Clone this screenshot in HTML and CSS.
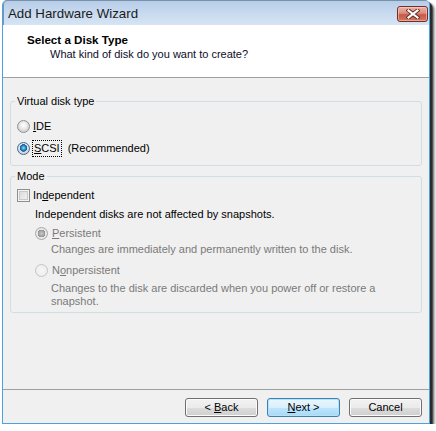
FILE: index.html
```html
<!DOCTYPE html>
<html>
<head>
<meta charset="utf-8">
<link rel="stylesheet" href="styles.css">
</head>
<body>
<div class="window">
  <div class="titlebar">
    <span class="title">Add Hardware Wizard</span>
    <div class="close">
      <svg width="14" height="10" viewBox="0 0 14 10">
        <path d="M2.5 1.5 L11.5 8.5 M11.5 1.5 L2.5 8.5" stroke="#5a2a26" stroke-width="4" stroke-linecap="square"/>
        <path d="M2.5 1.5 L11.5 8.5 M11.5 1.5 L2.5 8.5" stroke="#ffffff" stroke-width="2.2" stroke-linecap="square"/>
      </svg>
    </div>
  </div>
  <div class="header">
    <div class="h-title">Select a Disk Type</div>
    <div class="h-sub">What kind of disk do you want to create?</div>
  </div>
  <div class="content">
    <fieldset class="group g1">
      <legend>Virtual disk type</legend>
      <div class="row r22">
        <span class="radio"></span>
        <span class="lbl"><u>I</u>DE</span>
      </div>
      <div class="row r22">
        <span class="radio checked"></span>
        <span class="lbl focus"><u>S</u>CSI</span>
        <span class="rec">(Recommended)</span>
      </div>
    </fieldset>
    <fieldset class="group g2">
      <legend>Mode</legend>
      <div class="row r22">
        <span class="check"></span>
        <span class="lbl">In<u>d</u>ependent</span>
      </div>
      <div class="desc d1">Independent disks are not affected by snapshots.</div>
      <div class="row r20 sub1">
        <span class="radio disabled dchecked"></span>
        <span class="lbl dis"><u>P</u>ersistent</span>
      </div>
      <div class="desc dis d2">Changes are immediately and permanently written to the disk.</div>
      <div class="row r20 sub2">
        <span class="radio disabled"></span>
        <span class="lbl dis">N<u>o</u>npersistent</span>
      </div>
      <div class="desc dis d3">Changes to the disk are discarded when you power off or restore a<br>snapshot.</div>
    </fieldset>
  </div>
  <div class="footer">
    <div class="btn">&lt; <u>B</u>ack</div>
    <div class="btn default"><u>N</u>ext &gt;</div>
    <div class="btn">Cancel</div>
  </div>
</div>
</body>
</html>
```
FILE: styles.css
```css
html, body {
  margin: 0;
  padding: 0;
  background: #ffffff;
}
body {
  font-family: "Liberation Sans", Arial, sans-serif;
  font-size: 11px;
  line-height: 13px;
  color: #000;
}
.window {
  margin-left: 2px;
  width: 428px;
  height: 424px;
  box-sizing: border-box;
  border: 1px solid #4aa3e0;
  border-top-color: #7b8fa8;
  border-radius: 5px 5px 0 0;
  display: flex;
  flex-direction: column;
  background: #f0f0f0;
  box-shadow: 2px 2px 0 #2a2a2a, 3px 3px 2px rgba(0,0,0,0.75), 5px 5px 3px rgba(0,0,0,0.35);
}
.titlebar {
  height: 24px;
  flex: none;
  display: flex;
  align-items: center;
  justify-content: space-between;
  padding: 0 1px 0 5px;
  background: linear-gradient(#b6cde8, #c8daef 50%, #d6e4f4);
  border-radius: 4px 4px 0 0;
  box-shadow: inset 1px 0 0 #7f93ab;
}
.title {
  font-size: 13.3px;
  line-height: 24px;
  color: #1b1b1b;
  padding-top: 2px;
}
.close {
  width: 29px;
  height: 14px;
  margin-top: 2px;
  border: 1px solid #7a2c22;
  border-radius: 3px;
  background: linear-gradient(#eab3a7, #dc8a7b 45%, #c75a48 55%, #d0765f);
  box-shadow: inset 0 0 0 1px rgba(255,220,210,0.5);
  display: flex;
  align-items: center;
  justify-content: center;
}
.header {
  height: 53px;
  flex: none;
  box-sizing: border-box;
  background: #fff;
  border-bottom: 1px solid #a0a0a0;
  padding: 8px 0 0 24px;
}
.h-title {
  font-weight: bold;
  font-size: 11.6px;
}
.h-sub {
  margin: 2px 0 0 23px;
  color: #0d0d2a;
}
.content {
  flex: 1;
  padding: 17px 7px 0 7px;
}
.group {
  margin: 0;
  padding: 7px 6px 6px 6px;
  border: 1px solid #d2dce3;
  border-radius: 3px;
}
.group legend {
  padding: 0 2px;
  margin-left: -2px;
  line-height: 13px;
}
.g2 {
  margin-top: 4px;
  padding-top: 1px;
  padding-bottom: 4px;
}
.row {
  display: flex;
  align-items: center;
}
.r22 { height: 22px; }
.r20 { height: 20px; }
.lbl { margin-left: 3px; }
.focus {
  outline: 1px dotted #000;
  outline-offset: 1px;
  margin-left: 4px;
}
.rec { margin-left: 8px; }
.sub1 { margin: 2px 0 0 18px; }
.sub2 { margin: 4px 0 0 18px; }
.sub1 .lbl, .sub2 .lbl { margin-left: 4px; }
.desc { margin-left: 18px; }
.d1 { margin-top: 2px; }
.d2, .d3 { margin-left: 34px; }
.d3 { margin-top: 2px; }
.dis { color: #7a7a7a; }
.radio {
  width: 13px;
  height: 13px;
  box-sizing: border-box;
  border-radius: 50%;
  border: 1px solid #8e9297;
  background: radial-gradient(circle at 50% 40%, #ffffff 0, #eeeeee 3px, #d2d2d2 6px);
  flex: none;
}
.radio.checked {
  border-color: #3a6e9c;
  background:
    radial-gradient(circle at 50% 45%, #8fdaf8 0, #3aa2de 1.6px, #1a5f9c 3.2px, #2b6da5 3.6px, transparent 4px),
    radial-gradient(circle at 50% 40%, #ffffff 0, #eeeeee 3px, #d2d2d2 6px);
}
.radio.disabled {
  border-color: #c3c4c5;
  background: radial-gradient(circle, #f7f7f7 0, #ededed 6px);
}
.radio.dchecked {
  border-color: #a9a9a9;
  background:
    radial-gradient(circle, #c8c8c8 0, #a2a2a2 2.8px, #909090 3.6px, transparent 4px),
    radial-gradient(circle, #f7f7f7 0, #e2e2e2 6px);
}
.check {
  width: 13px;
  height: 13px;
  box-sizing: border-box;
  border: 1px solid #8e8f8f;
  background: linear-gradient(135deg, #d6d6d6, #f6f6f6);
  box-shadow: inset 0 0 0 1px #f4f4f4, inset 0 0 0 2px #c9c9c9;
  flex: none;
}
.footer {
  height: 34px;
  flex: none;
  box-sizing: border-box;
  border-top: 1px solid #a0a0a0;
  padding: 8px 7px 0 0;
  display: flex;
  justify-content: flex-end;
  gap: 9px;
}
.btn {
  width: 73px;
  height: 19px;
  box-sizing: border-box;
  border: 1px solid #707070;
  border-radius: 3px;
  background: linear-gradient(#f2f2f2 0, #ebebeb 50%, #dddddd 50%, #cfcfcf 100%);
  box-shadow: inset 0 0 0 1px #fbfbfb;
  text-align: center;
  line-height: 17px;
}
.btn.default {
  border-color: #3c7fb1;
  background: linear-gradient(#eaf6fd 0, #d9f0fc 50%, #bee6fd 50%, #a7d9f5 100%);
  box-shadow: inset 0 0 0 1px #b6e2f8;
}
```
